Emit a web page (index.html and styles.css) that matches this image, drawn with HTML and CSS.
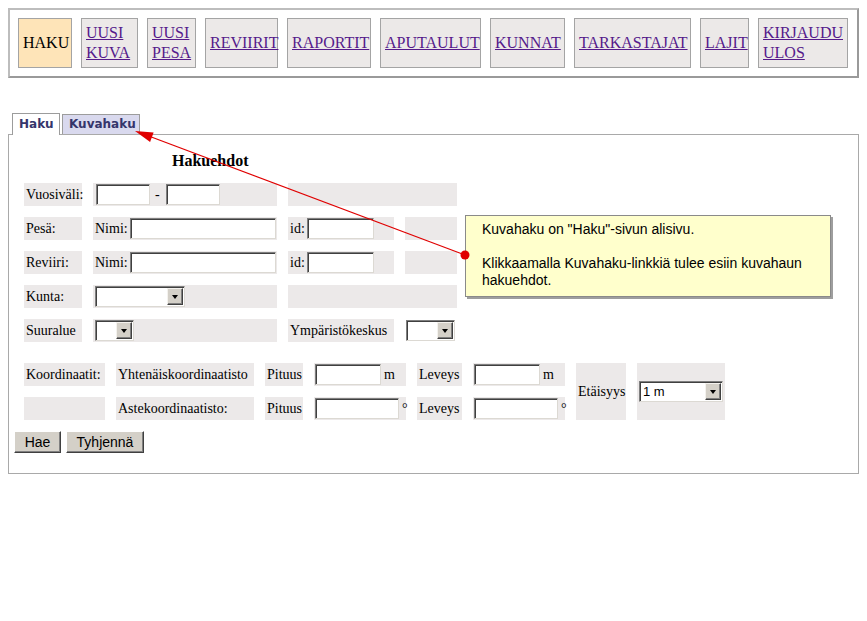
FILE: index.html
```html
<!DOCTYPE html>
<html lang="fi">
<head>
<meta charset="utf-8">
<title>Haku</title>
<link rel="stylesheet" href="styles.css">
</head>
<body>
<div class="nav">
  <div class="nav-item current w1">HAKU</div>
  <div class="nav-item w2"><a href="#">UUSI<br>KUVA</a></div>
  <div class="nav-item w3"><a href="#">UUSI<br>PESA</a></div>
  <div class="nav-item w4"><a href="#">REVIIRIT</a></div>
  <div class="nav-item w5"><a href="#">RAPORTIT</a></div>
  <div class="nav-item w6"><a href="#">APUTAULUT</a></div>
  <div class="nav-item w7"><a href="#">KUNNAT</a></div>
  <div class="nav-item w8"><a href="#">TARKASTAJAT</a></div>
  <div class="nav-item w9"><a href="#">LAJIT</a></div>
  <div class="nav-item w10"><a href="#">KIRJAUDU<br>ULOS</a></div>
</div>

<div class="tabs">
  <span class="tab active">Haku</span>
  <a class="tab sub" href="#">Kuvahaku</a>
</div>

<div class="panel">
  <div class="title">Hakuehdot</div>

  <div class="grid1">
    <div class="c">Vuosiväli:</div>
    <div class="c pl3"><span class="inp w54"></span><span class="dash">-</span><span class="inp w54"></span></div>
    <div class="c span2"></div>

    <div class="c">Pesä:</div>
    <div class="c">Nimi:<span class="inp w146 push"></span></div>
    <div class="c">id:<span class="inp w67 ml2"></span></div>
    <div class="c"></div>

    <div class="c">Reviiri:</div>
    <div class="c">Nimi:<span class="inp w146 push"></span></div>
    <div class="c">id:<span class="inp w67 ml2"></span></div>
    <div class="c"></div>

    <div class="c">Kunta:</div>
    <div class="c"><span class="sel w90"><span class="val"></span><span class="drop"></span></span></div>
    <div class="c span2"></div>

    <div class="c">Suuralue</div>
    <div class="c"><span class="sel w39"><span class="val"></span><span class="drop"></span></span></div>
    <div class="c">Ympäristökeskus</div>
    <div class="c pl1 nobg"><span class="sel w49"><span class="val"></span><span class="drop"></span></span></div>
  </div>

  <div class="grid2">
    <div class="c">Koordinaatit:</div>
    <div class="c">Yhtenäiskoordinaatisto</div>
    <div class="c">Pituus</div>
    <div class="c pl1"><span class="inp w66"></span><span class="unit">m</span></div>
    <div class="c">Leveys</div>
    <div class="c pl1"><span class="inp w66"></span><span class="unit">m</span></div>
    <div class="c tall">Etäisyys</div>
    <div class="c tall"><span class="sel w84"><span class="val">1 m</span><span class="drop"></span></span></div>

    <div class="c"></div>
    <div class="c">Astekoordinaatisto:</div>
    <div class="c">Pituus</div>
    <div class="c pl1"><span class="inp w84"></span><span class="unit">°</span></div>
    <div class="c">Leveys</div>
    <div class="c pl1"><span class="inp w84"></span><span class="unit">°</span></div>
  </div>

  <div class="btns">
    <button class="btn b-hae" type="button">Hae</button>
    <button class="btn b-tyh" type="button">Tyhjennä</button>
  </div>
</div>

<div class="callout">
  <p>Kuvahaku on "Haku"-sivun alisivu.</p>
  <p class="gap">Klikkaamalla Kuvahaku-linkkiä tulee esiin kuvahaun hakuehdot.</p>
</div>

<svg class="arrow" width="867" height="621" viewBox="0 0 867 621">
  <line x1="465" y1="255" x2="150" y2="136.5" stroke="#e00000" stroke-width="1.2"/>
  <polygon points="135,131 153.6,132.6 150.1,142" fill="#e00000"/>
  <circle cx="465" cy="255" r="4.5" fill="#e00000"/>
</svg>
</body>
</html>
```

FILE: styles.css
```css
* { box-sizing: border-box; }

body {
  margin: 8px;
  font-family: "Liberation Serif", "Times New Roman", serif;
  font-size: 14px;
  color: #000;
  background: #fff;
}

/* top navigation */
.nav {
  display: flex;
  gap: 9px;
  height: 70px;
  padding: 8px 9px 8px 8px;
  border: 2px solid #bdbdbd;
  border-right-color: #9a9a9a;
  border-bottom-color: #9a9a9a;
  font-size: 16px;
  line-height: 20px;
}
.nav-item {
  display: flex;
  align-items: center;
  padding: 0 2px 0 4px;
  border: 1px solid #a4a4a4;
  background: #ece9e8;
}
.nav-item.current { background: #fee4b8; }
.nav-item a { color: #551a8b; }
.w1 { width: 54px; }
.w2 { width: 57px; }
.w3 { width: 49px; }
.w4 { width: 73px; }
.w5 { width: 84px; }
.w6 { width: 101px; }
.w7 { width: 75px; }
.w8 { width: 117px; }
.w9 { width: 49px; }
.w10 { width: 90px; }

/* tabs */
.tabs {
  display: flex;
  align-items: flex-end;
  gap: 2px;
  height: 21px;
  margin: 35px 0 0 4px;
  position: relative;
  z-index: 1;
}
.tab {
  display: block;
  font-family: "DejaVu Sans", Verdana, sans-serif;
  font-weight: bold;
  font-size: 12px;
  color: #35356b;
  text-decoration: none;
  border: 1px solid #9c9c9c;
  border-bottom: none;
  padding: 0 0 0 6px;
}
.tab.active {
  width: 48px;
  height: 22px;
  line-height: 21px;
  margin-bottom: -1px;
  background: #fff;
}
.tab.sub {
  width: 78px;
  height: 20px;
  line-height: 18px;
  background: #d9d9ee;
}

/* main panel */
.panel {
  height: 340px;
  border: 1px solid #a9a9a9;
  padding: 0 5px;
}
.title {
  margin: 15px 0 0 158px;
  font-weight: bold;
  font-size: 16px;
  line-height: 22px;
}

.grid1 {
  display: grid;
  grid-template-columns: 58px 184px 106px 52px;
  grid-auto-rows: 23px;
  gap: 11px;
  margin: 11px 0 0 10px;
  width: max-content;
}
.grid2 {
  display: grid;
  grid-template-columns: 81px 138px 38px 92px 45px 92px 50px 88px;
  grid-auto-rows: 23px;
  gap: 11px;
  margin: 21px 0 0 10px;
  width: max-content;
}

.c {
  display: flex;
  align-items: center;
  padding: 0 1px 0 2px;
  background: #ece9e9;
  white-space: nowrap;
}
.span2 { grid-column: span 2; }
.tall { grid-row: span 2; }
.pl3 { padding-left: 3px; }
.pl1 { padding-left: 1px; }
.nobg { background: #fff; }

.inp {
  display: block;
  flex: none;
  height: 21px;
  background: #fff;
  border: 1px solid;
  border-color: #7f7f7f #dcd9d3 #dcd9d3 #7f7f7f;
  box-shadow: inset 1px 1px 0 #404040;
}
.w54 { width: 54px; }
.w146 { width: 146px; }
.w67 { width: 67px; }
.w66 { width: 66px; }
.w84 { width: 84px; }
.w90 { width: 90px; }
.w39 { width: 39px; }
.w49 { width: 49px; }
.push { margin-left: auto; }
.ml2 { margin-left: 2px; }
.dash { margin: 0 6px 0 5px; }
.unit { margin-left: 3px; }

/* classic dropdown */
.sel {
  display: flex;
  align-items: center;
  justify-content: space-between;
  flex: none;
  height: 21px;
  padding: 1px 1px 1px 3px;
  background: #fff;
  border: 1px solid;
  border-color: #7f7f7f #dcd9d3 #dcd9d3 #7f7f7f;
  box-shadow: inset 1px 1px 0 #404040;
  font-family: "Liberation Sans", Arial, sans-serif;
  font-size: 13px;
}
.drop {
  display: flex;
  align-items: center;
  justify-content: center;
  width: 16px;
  height: 17px;
  background: #d4d0c8;
  border: 1px solid;
  border-color: #f4f2ee #404040 #404040 #f4f2ee;
  box-shadow: inset -1px -1px 0 #808080;
}
.drop::after {
  content: "";
  border-left: 3.5px solid transparent;
  border-right: 3.5px solid transparent;
  border-top: 4px solid #000;
}

/* buttons */
.btns {
  display: flex;
  gap: 5px;
  margin-top: 11px;
}
.btn {
  height: 22px;
  padding: 0;
  font-family: "Liberation Sans", Arial, sans-serif;
  font-size: 14px;
  color: #000;
  background: #d4d0c8;
  border: 1px solid;
  border-color: #fff #404040 #404040 #fff;
  box-shadow: inset -1px -1px 0 #808080;
}
.b-hae { width: 47px; }
.b-tyh { width: 78px; }

/* annotation */
.callout {
  position: absolute;
  left: 465px;
  top: 215px;
  width: 366px;
  height: 82px;
  padding: 5px 8px 0 16px;
  background: #ffffcc;
  border: 1px solid #8a8a8a;
  box-shadow: 2px 2px 0 #9e9e9e;
  font-family: "Liberation Sans", Arial, sans-serif;
  font-size: 14px;
  line-height: 17px;
  z-index: 2;
}
.callout p { margin: 0; }
.callout p.gap { margin-top: 17px; }

.arrow {
  position: absolute;
  left: 0;
  top: 0;
  pointer-events: none;
  z-index: 3;
}
```
